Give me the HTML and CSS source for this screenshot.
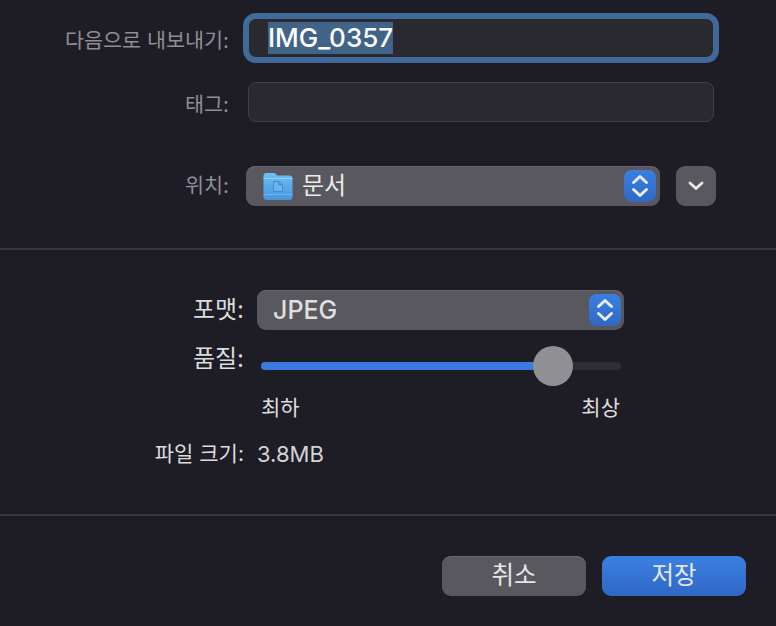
FILE: index.html
```html
<!DOCTYPE html>
<html lang="ko">
<head>
    <meta charset="UTF-8">
    <meta name="viewport" content="width=device-width">
    <title>내보내기</title>
    <link rel="stylesheet" href="styles.css">
</head>
<body>
<div class="dialog">
    <div class="top">
        <div class="row name-row">
            <div class="label low">다음으로 내보내기:</div>
            <div class="field focus"><span class="selected">IMG_0357</span></div>
        </div>
        <div class="row tag-row">
            <div class="label low">태그:</div>
            <div class="field"></div>
        </div>
        <div class="row where-row">
            <div class="label">위치:</div>
            <div class="select where">
                <svg class="folder" width="30" height="28" viewBox="0 0 30 28">
                    <defs>
                        <linearGradient id="fold" x1="0" y1="0" x2="0" y2="1">
                            <stop offset="0" stop-color="#70bff3"/>
                            <stop offset="1" stop-color="#4596dc"/>
                        </linearGradient>
                    </defs>
                    <path d="M.5 4C.5 2 1.500 1 3.500 1h7c1.500 0 2 .5 2.800 1.500l.7 1h12.500c2 0 3 1 3 3V25c0 2-1 3-3 3h-23c-2 0-3-1-3-3z" fill="url(#fold)"/>
                    <path d="M.5 6.500h29" stroke="#8fd0f7" stroke-width="1"/>
                    <path d="M.5 22.500h29" stroke="#6ab5ee" stroke-width="1"/>
                    <path d="M10.500 9.500h5.500l3.500 3.500v6.500h-9zM16 9.500V13h3.500" fill="#68b4ec" stroke="#3f8dd2" stroke-width="1"/>
                </svg>
                <span class="value">문서</span>
                <span class="stepper">
                    <svg width="18" height="28" viewBox="0 0 18 28"><path d="M2.500 10.500L9 4.500l6.500 6M2.500 17.500l6.500 6 6.500-6" fill="none" stroke="#e6edf8" stroke-width="3" stroke-linecap="round" stroke-linejoin="round"/></svg>
                </span>
            </div>
            <div class="expand">
                <svg width="18" height="10" viewBox="0 0 18 10"><path d="M3 2l6 5.500 6-5.500" fill="none" stroke="#ebebec" stroke-width="2.800" stroke-linecap="round" stroke-linejoin="round"/></svg>
            </div>
        </div>
    </div>

    <div class="middle">
        <div class="row format-row">
            <div class="label bright">포맷:</div>
            <div class="select format">
                <span class="value latin">JPEG</span>
                <span class="stepper">
                    <svg width="18" height="28" viewBox="0 0 18 28"><path d="M2.500 10.500L9 4.500l6.500 6M2.500 17.500l6.500 6 6.500-6" fill="none" stroke="#e6edf8" stroke-width="3" stroke-linecap="round" stroke-linejoin="round"/></svg>
                </span>
            </div>
        </div>
        <div class="row quality-row">
            <div class="label bright">품질:</div>
            <div class="slider-box">
                <div class="track"><div class="fill"></div><div class="knob"></div></div>
                <div class="ends"><span>최하</span><span>최상</span></div>
            </div>
        </div>
        <div class="row size-row">
            <div class="label bright small">파일 크기:</div>
            <div class="size">3.8MB</div>
        </div>
    </div>

    <div class="bottom">
        <button class="btn">취소</button>
        <button class="btn primary">저장</button>
    </div>
</div>
</body>
</html>
```

FILE: styles.css
```css
* {
    box-sizing: border-box;
}

body {
    margin: 0;
    background: #1e1d26;
    color: #e4e4e5;
    font-family: Inter, "Noto Sans CJK KR", sans-serif;
    overflow: hidden;
}

.dialog {
    width: 776px;
    height: 626px;
}

.row {
    display: flex;
    align-items: center;
}

.label {
    text-align: right;
    font-size: 20.700px;
    line-height: 28px;
    color: #8f8e92;
}

.label.low {
    padding-top: 5px;
}

.label.bright {
    color: #dcdcdd;
    font-size: 24px;
}

.label.small {
    font-size: 21px;
}

/* top section */
.top {
    height: 250px;
    padding-top: 18px;
    border-bottom: 2px solid #37363c;
}

.top .label {
    width: 229px;
    flex: none;
}

.field {
    width: 466px;
    height: 40px;
    margin-left: 19px;
    border-radius: 8px;
    background: #2a2930;
    border: 1px solid #414046;
}

.field.focus {
    display: flex;
    align-items: center;
    padding-left: 19px;
    border-color: #3f6a99;
    box-shadow: 0 0 0 5px #3f6a99;
    font-size: 26px;
    font-weight: 500;
    color: #fff;
}

.selected {
    background: #426388;
    line-height: 32px;
    height: 32px;
    white-space: nowrap;
}

.tag-row {
    margin-top: 24px;
}

.where-row {
    margin-top: 44px;
}

.select {
    display: flex;
    align-items: center;
    height: 40px;
    border-radius: 9px;
    background: #59585e;
    box-shadow: inset 0 1px 0 #66656b;
    position: relative;
}

.where {
    width: 414px;
    margin-left: 17px;
    padding-left: 17px;
}

.where .stepper {
    margin-right: 4px;
}

.format {
    width: 367px;
    margin-left: 13px;
    padding-left: 16px;
}

.value {
    font-size: 24px;
    line-height: 30px;
    color: #ebebec;
    margin-left: 9px;
}

.value.latin {
    margin-left: 0;
    font-size: 25px;
    font-weight: 500;
    color: #dfdfe0;
}

.stepper {
    display: flex;
    align-items: center;
    justify-content: center;
    width: 32px;
    height: 32px;
    margin-left: auto;
    margin-right: 3px;
    border-radius: 8px;
    background: linear-gradient(#3a7fe2, #2f68c4);
}

.expand {
    display: flex;
    align-items: center;
    justify-content: center;
    width: 40px;
    height: 40px;
    margin-left: 16px;
    border-radius: 9px;
    background: #59585e;
}

/* middle section */
.middle {
    height: 266px;
    padding-top: 40px;
    border-bottom: 2px solid #37363c;
}

.middle .label {
    width: 244px;
    flex: none;
}

.quality-row {
    align-items: flex-start;
    margin-top: 15px;
}

.slider-box {
    width: 360px;
    margin-left: 17px;
    padding-top: 17px;
}

.track {
    position: relative;
    height: 8px;
    border-radius: 4px;
    background: #2f2e35;
}

.fill {
    width: 292px;
    height: 8px;
    border-radius: 4px;
    background: #3b7ade;
}

.knob {
    position: absolute;
    left: 272px;
    top: -16px;
    width: 40px;
    height: 40px;
    border-radius: 50%;
    background: #908f94;
}

.ends {
    display: flex;
    justify-content: space-between;
    margin-top: 24px;
    padding-right: 1px;
    font-size: 21px;
    line-height: 28px;
    color: #dcdcdd;
}

.size-row {
    margin-top: 17px;
}

.size {
    margin-left: 13px;
    font-size: 22px;
    line-height: 30px;
    color: #d4d4d5;
}

/* buttons */
.bottom {
    display: flex;
    justify-content: flex-end;
    gap: 16px;
    padding: 40px 30px 0 0;
}

.btn {
    width: 144px;
    height: 40px;
    padding: 0 0 2px;
    border: none;
    border-radius: 9px;
    background: #59585e;
    box-shadow: inset 0 1px 0 #6a696f;
    color: #e6e6e7;
    font-family: inherit;
    font-size: 24.500px;
    line-height: 36px;
}

.btn.primary {
    background: linear-gradient(#3a7fe2, #2f68c4);
    box-shadow: none;
}
```
